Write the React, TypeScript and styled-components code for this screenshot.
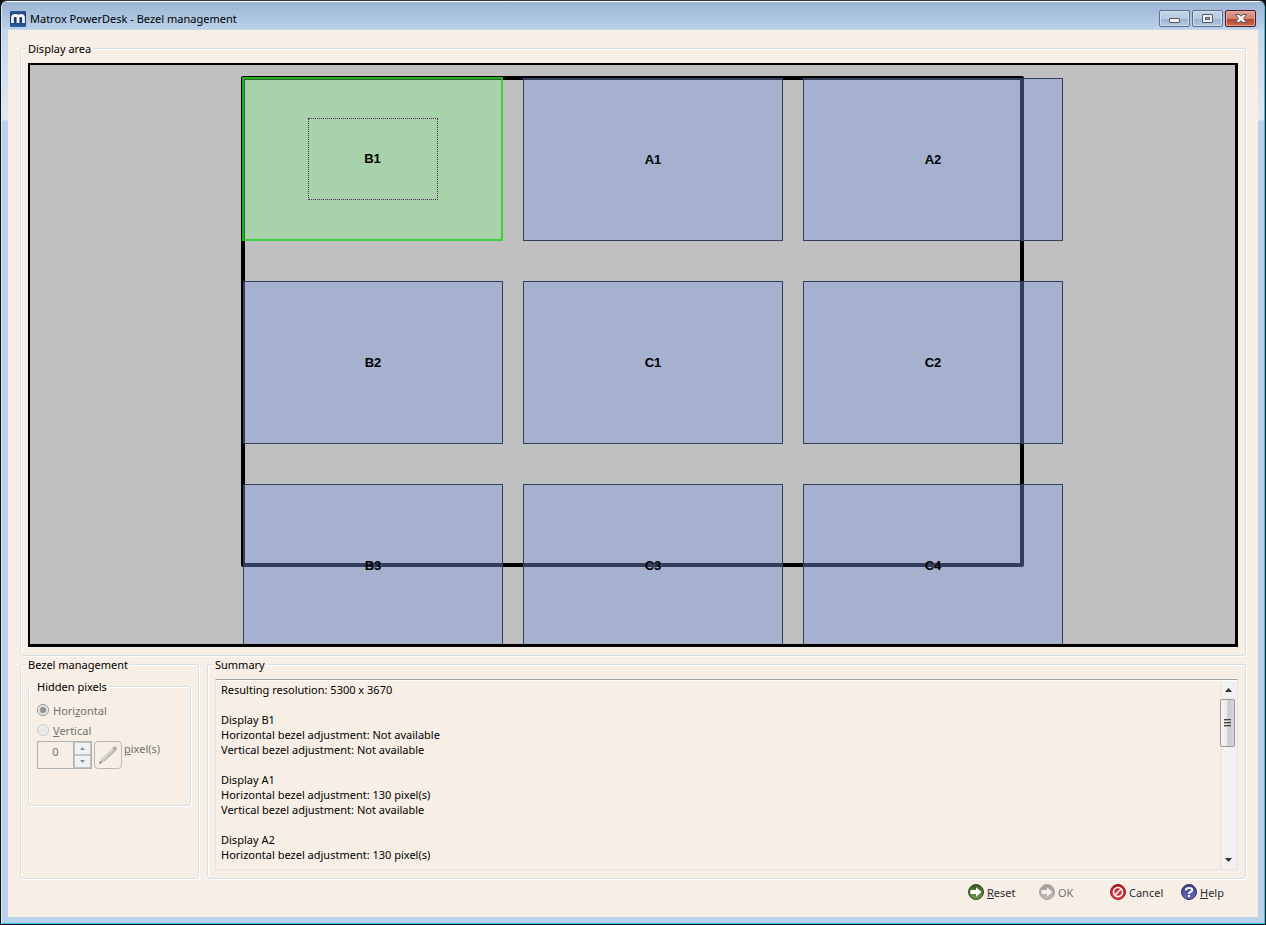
import React from "react";
import styled, { createGlobalStyle } from "styled-components";

const cream = "#f7eee5";
const line = "#d5dfe8";
const muted = "#707070";

const GlobalStyle = createGlobalStyle`
  * { box-sizing: border-box; }
  body { margin: 0; background: #101418; }
  body, button, input, textarea {
    font-family: "Noto Sans", "Open Sans", sans-serif;
    font-size: 11px;
    line-height: 15px;
    color: #000;
  }
`;

const Window = styled.div`
  display: flex;
  flex-direction: column;
  min-height: 100vh;
  padding: 0 7px 7px 6px;
  border: 1px solid #101418;
  border-top-color: #30343c;
  border-radius: 7px 7px 0 0;
  background:
    linear-gradient(#fff, #fff) top / 100% 1px no-repeat,
    linear-gradient(#9ab3d2, #b9d1ea 28px, transparent 28px) top / 100% 29px no-repeat,
    linear-gradient(#b9d1ea, #dfeaf5 119px, #b9d1ea 120px);
  box-shadow: inset 1px 0 #dce9f4, inset -1px -1px #35c5e0;
`;

const TitleBar = styled.header`
  display: flex;
  align-items: center;
  gap: 4px;
  height: 29px;
  padding: 6px 2px 0 3px;
`;

const Title = styled.h1`
  flex: 1;
  margin: 0;
  font-size: 11px;
  font-weight: 400;
`;

const Controls = styled.div`
  display: flex;
  gap: 2px;
`;

const ControlButton = styled.button<{ $danger?: boolean }>`
  display: flex;
  align-items: center;
  justify-content: center;
  width: 31px;
  height: 17px;
  padding: 0;
  border: 1px solid ${(p) => (p.$danger ? "#4b1a24" : "#5d6f88")};
  border-radius: 2px;
  box-shadow: inset 0 0 0 1px ${(p) => (p.$danger ? "#e3a79c" : "#cfdfee")};
  background: ${(p) =>
    p.$danger
      ? "linear-gradient(#e2a396 0, #d6806e 50%, #b8402a 51%, #cc6a4c 100%)"
      : "linear-gradient(#c3d5e8 0, #b6cbe1 50%, #98b2cd 51%, #b3cce4 100%)"};
`;

const Client = styled.main`
  display: flex;
  flex: 1;
  flex-direction: column;
  margin-left: 1px;
  padding: 11px 12px 14px;
  background: ${cream};
`;

const Group = styled.fieldset`
  min-width: 0;
  margin: 0;
  padding: 7px 7px 8px;
  border: 1px solid ${line};
  border-radius: 3px;
  box-shadow: inset 1px 1px #fff, 1px 1px #fff;
`;

const Legend = styled.legend`
  height: 15px;
  margin-left: -2px;
  padding: 0 2px;
  background: ${cream};
`;

const Canvas = styled.div`
  display: flow-root;
  min-height: calc(100vh - 341px);
  overflow: hidden;
  border: 2px solid #000;
  border-right-width: 3px;
  border-bottom-width: 3px;
  background: #c0c0c0;
  contain: size;
`;

const Scene = styled.div`
  position: relative;
  width: 783px;
  height: 0;
  margin: 11px auto 0;
`;

const Desktop = styled.div`
  position: absolute;
  inset: 0 auto auto 0;
  width: 783px;
  height: 491px;
  border: 4px solid #000;
  border-radius: 2px;
`;

const Tile = styled.div<{ $col: number; $row: number; $active?: boolean }>`
  position: absolute;
  left: ${(p) => 2 + p.$col * 280 - (p.$active ? 1 : 0)}px;
  top: ${(p) => 2 + p.$row * 203 - (p.$active ? 1 : 0)}px;
  display: flex;
  align-items: center;
  justify-content: center;
  width: ${(p) => (p.$active ? 261 : 260)}px;
  height: ${(p) => (p.$active ? 164 : 163)}px;
  border: ${(p) => (p.$active ? "2px solid rgba(36, 210, 36, 0.85)" : "1px solid #333d5c")};
  background: ${(p) => (p.$active ? "rgba(132, 237, 137, 0.4)" : "rgba(127, 152, 230, 0.4)")};
  background-clip: padding-box;
  font: bold 13px/16px "Liberation Sans", Arial, sans-serif;
`;

const Focus = styled.span`
  display: flex;
  align-items: center;
  justify-content: center;
  width: 130px;
  height: 82px;
  border: 1px dotted #56205c;
`;

const Lower = styled.div`
  display: grid;
  grid-template-columns: 179px 1fr;
  gap: 8px;
  margin-top: 1px;
`;

const HiddenPixels = styled(Group)`
  min-height: 127px;
  padding: 6px 8px 8px;
`;

const RadioRow = styled.label`
  display: flex;
  align-items: center;
  gap: 4px;
  height: 20px;
  color: ${muted};
`;

const Radio = styled.input`
  appearance: none;
  width: 12px;
  height: 12px;
  margin: 0;
  border: 1px solid #c4c7ca;
  border-radius: 50%;
  background: radial-gradient(#e4e4e4, #f4f4f4);
  &:checked {
    border-color: #8e8f8f;
    background: radial-gradient(circle, #8d9092 0 2px, #a5a8aa 3px, #f4f4f4 4px);
  }
`;

const SpinRow = styled.div`
  display: flex;
  align-items: flex-start;
  gap: 2px;
  margin-top: 1px;
  color: ${muted};
`;

const Spin = styled.div`
  display: flex;
  height: 28px;
  border: 1px solid #adb2b5;
`;

const SpinInput = styled.input`
  width: 35px;
  padding: 0 0 7px;
  border: 0;
  background: transparent;
  color: ${muted};
  text-align: center;
`;

const SpinButtons = styled.div`
  display: flex;
  flex-direction: column;
  width: 18px;
  border-left: 1px solid #adb2b5;
`;

const SpinButton = styled.button`
  display: flex;
  flex: 1;
  align-items: center;
  justify-content: center;
  margin: 0;
  padding: 0;
  border: 1px solid #bfc3c8;
  background: #f1f1f1;
`;

const PencilButton = styled.button`
  width: 28px;
  height: 28px;
  padding: 0;
  border: 1px solid #bdb7b0;
  border-radius: 4px;
  background: transparent;
  svg { display: block; margin: auto; }
`;

const SummaryBox = styled.div`
  display: flex;
  height: 191px;
  border: 1px solid #e2e3ea;
  border-top-color: #9fa3aa;
  box-shadow: inset 0 1px #fff;
`;

const SummaryText = styled.textarea`
  flex: 1;
  padding: 2px 5px 0;
  border: 0;
  resize: none;
  overflow: hidden;
  outline: 0;
  background: transparent;
`;

const ScrollBar = styled.div`
  display: flex;
  flex-direction: column;
  width: 17px;
  margin-top: 1px;
  padding-right: 1px;
  background: linear-gradient(90deg, #e4e4e4, #f3f3f3 3px, #f0f0f0);
`;

const ScrollButton = styled.button`
  display: flex;
  align-items: center;
  justify-content: center;
  height: 18px;
  padding: 0;
  border: 0;
  background: transparent;
`;

const Thumb = styled.div`
  display: flex;
  flex-direction: column;
  align-items: center;
  justify-content: center;
  gap: 1px;
  height: 48px;
  margin-right: 1px;
  border: 1px solid #979797;
  border-radius: 2px;
  background: linear-gradient(90deg, #f5f5f5, #e9e9eb 45%, #c9c9cc 55%, #d8d8da);
`;

const Grip = styled.span`
  width: 7px;
  height: 2px;
  border-top: 1px solid #444;
  border-bottom: 1px solid #aaa;
`;

const ScrollTrack = styled.div`
  flex: 1;
`;

const Footer = styled.footer`
  display: grid;
  grid-template-columns: repeat(4, 71px);
  justify-content: end;
  margin: 2px -6px 0 0;
`;

const ActionButton = styled.button`
  display: flex;
  align-items: center;
  gap: 3px;
  height: 22px;
  padding: 0;
  border: 0;
  background: transparent;
  color: #2b2b33;
  &:disabled { color: ${muted}; }
`;

const displays = [
  ["B1", "A1", "A2"],
  ["B2", "C1", "C2"],
  ["B3", "C3", "C4"],
];

const summary = `Resulting resolution: 5300 x 3670

Display B1
Horizontal bezel adjustment: Not available
Vertical bezel adjustment: Not available

Display A1
Horizontal bezel adjustment: 130 pixel(s)
Vertical bezel adjustment: Not available

Display A2
Horizontal bezel adjustment: 130 pixel(s)`;

const AppIcon = () => (
  <svg width="16" height="16" viewBox="0 0 16 16" aria-hidden="true">
    <defs>
      <linearGradient id="app" x2="0" y2="1">
        <stop stopColor="#2d568f" />
        <stop offset=".5" stopColor="#14356f" />
        <stop offset="1" stopColor="#2e60a8" />
      </linearGradient>
    </defs>
    <rect width="16" height="16" rx="1" fill="url(#app)" />
    <path d="M2.500 12V6.500Q2.500 4.500 5.300 4.500Q8 4.500 8 6.500V12M8 6.500Q8 4.500 10.700 4.500Q13.500 4.500 13.500 6.500V12" fill="none" stroke="#f4f6fa" strokeWidth="2.800" />
  </svg>
);

const Arrow = ({ up, small }: { up?: boolean; small?: boolean }) => (
  <svg width={small ? 5 : 7} height={small ? 3 : 4} viewBox="0 0 7 4" aria-hidden="true">
    <path d={up ? "M0 4L3.500 0L7 4Z" : "M0 0L3.500 4L7 0Z"} fill={small ? "#8c8c8c" : "#333"} />
  </svg>
);

const Pencil = () => (
  <svg width="22" height="22" viewBox="0 0 22 22" aria-hidden="true">
    <path d="M2 20L4 15L16 3.500Q17.500 2 19.500 3Q20.500 5 19 6.500L7 17.500Z" fill="#c6c4c1" />
    <path d="M5 15.500L16 5" stroke="#dcdad8" strokeWidth="1.500" />
    <path d="M7 17L18 7" stroke="#aaa8a5" strokeWidth="1" />
    <path d="M15.500 4Q17.500 2 19.500 3Q20.500 5 18.500 7Z" fill="#aeaeae" />
    <path d="M2 20L3.200 17L5 19Z" fill="#777" />
  </svg>
);

type Kind = "reset" | "ok" | "cancel" | "help";
const tones: Record<Kind, [string, string, string]> = {
  reset: ["#6da046", "#355c25", "#304822"],
  ok: ["#bdbab6", "#a09d99", "#aaa6a2"],
  cancel: ["#e34850", "#b9131d", "#8f1820"],
  help: ["#6a6fc0", "#383c8e", "#2b2e6c"],
};

const ActionIcon = ({ kind }: { kind: Kind }) => (
  <svg width="16" height="16" viewBox="0 0 16 16" aria-hidden="true">
    <defs>
      <linearGradient id={kind} x2="0" y2="1">
        <stop stopColor={tones[kind][1]} />
        <stop offset="1" stopColor={tones[kind][0]} />
      </linearGradient>
    </defs>
    <circle cx="8" cy="8" r="7.500" fill={`url(#${kind})`} stroke={tones[kind][2]} />
    {(kind === "reset" || kind === "ok") && (
      <path d="M2.500 6H8V3.200L13.500 8L8 12.800V10H2.500Z" fill={kind === "ok" ? "#f3eee9" : "#fff"} />
    )}
    {kind === "cancel" && (
      <g fill="none" stroke="#fff" strokeWidth="1.600">
        <circle cx="8" cy="8" r="4.500" />
        <path d="M5 11L11 5" />
      </g>
    )}
    {kind === "help" && (
      <g fill="none" stroke="#fff" strokeWidth="2">
        <path d="M4.800 6.500Q4.800 4 8 4Q11.200 4 11.200 6.100Q11.200 7.500 9.500 8Q8 8.500 8 10" />
        <path d="M8 11V13" />
      </g>
    )}
  </svg>
);

export default function App() {
  return (
    <>
      <GlobalStyle />
      <Window>
        <TitleBar>
          <AppIcon />
          <Title>Matrox PowerDesk - Bezel management</Title>
          <Controls>
            <ControlButton aria-label="Minimize">
              <svg width="11" height="9" viewBox="0 0 11 9">
                <rect x=".5" y="4.500" width="10" height="4" rx=".5" fill="#f5f5f5" stroke="#535666" />
              </svg>
            </ControlButton>
            <ControlButton aria-label="Maximize">
              <svg width="11" height="9" viewBox="0 0 11 9">
                <rect x=".5" y=".5" width="10" height="8" rx=".5" fill="#f5f5f5" stroke="#535666" />
                <rect x="3.500" y="3.500" width="4" height="2" fill="#a0b8d4" stroke="#535666" />
              </svg>
            </ControlButton>
            <ControlButton $danger aria-label="Close">
              <svg width="12" height="9" viewBox="0 0 12 9">
                <path d="M.5 .5H4L6 2.200L8 .5H11.500L8.500 4.500L11.500 8.500H8L6 6.800L4 8.500H.5L3.500 4.500Z" fill="#f5f5f5" stroke="#535666" />
              </svg>
            </ControlButton>
          </Controls>
        </TitleBar>
        <Client>
          <Group>
            <Legend>Display area</Legend>
            <Canvas>
              <Scene>
                <Desktop />
                {displays.map((names, row) =>
                  names.map((name, col) => {
                    const active = name === "B1";
                    return (
                      <Tile key={name} $col={col} $row={row} $active={active}>
                        {active ? <Focus>{name}</Focus> : name}
                      </Tile>
                    );
                  })
                )}
              </Scene>
            </Canvas>
          </Group>
          <Lower>
            <Group>
              <Legend>Bezel management</Legend>
              <HiddenPixels>
                <Legend>Hidden pixels</Legend>
                <RadioRow>
                  <Radio type="radio" name="direction" defaultChecked disabled />
                  <span>Hori<u>z</u>ontal</span>
                </RadioRow>
                <RadioRow>
                  <Radio type="radio" name="direction" disabled />
                  <span><u>V</u>ertical</span>
                </RadioRow>
                <SpinRow>
                  <Spin>
                    <SpinInput id="pixels" type="text" defaultValue="0" disabled />
                    <SpinButtons>
                      <SpinButton disabled aria-label="Increase"><Arrow up small /></SpinButton>
                      <SpinButton disabled aria-label="Decrease"><Arrow small /></SpinButton>
                    </SpinButtons>
                  </Spin>
                  <PencilButton disabled aria-label="Edit"><Pencil /></PencilButton>
                  <label htmlFor="pixels"><u>p</u>ixel(s)</label>
                </SpinRow>
              </HiddenPixels>
            </Group>
            <Group>
              <Legend id="summary">Summary</Legend>
              <SummaryBox>
                <SummaryText readOnly aria-labelledby="summary" value={summary} />
                <ScrollBar>
                  <ScrollButton aria-label="Scroll up"><Arrow up /></ScrollButton>
                  <Thumb><Grip /><Grip /><Grip /></Thumb>
                  <ScrollTrack />
                  <ScrollButton aria-label="Scroll down"><Arrow /></ScrollButton>
                </ScrollBar>
              </SummaryBox>
            </Group>
          </Lower>
          <Footer>
            <ActionButton><ActionIcon kind="reset" /><span><u>R</u>eset</span></ActionButton>
            <ActionButton disabled><ActionIcon kind="ok" /><span>OK</span></ActionButton>
            <ActionButton><ActionIcon kind="cancel" /><span>Cancel</span></ActionButton>
            <ActionButton><ActionIcon kind="help" /><span><u>H</u>elp</span></ActionButton>
          </Footer>
        </Client>
      </Window>
    </>
  );
}
